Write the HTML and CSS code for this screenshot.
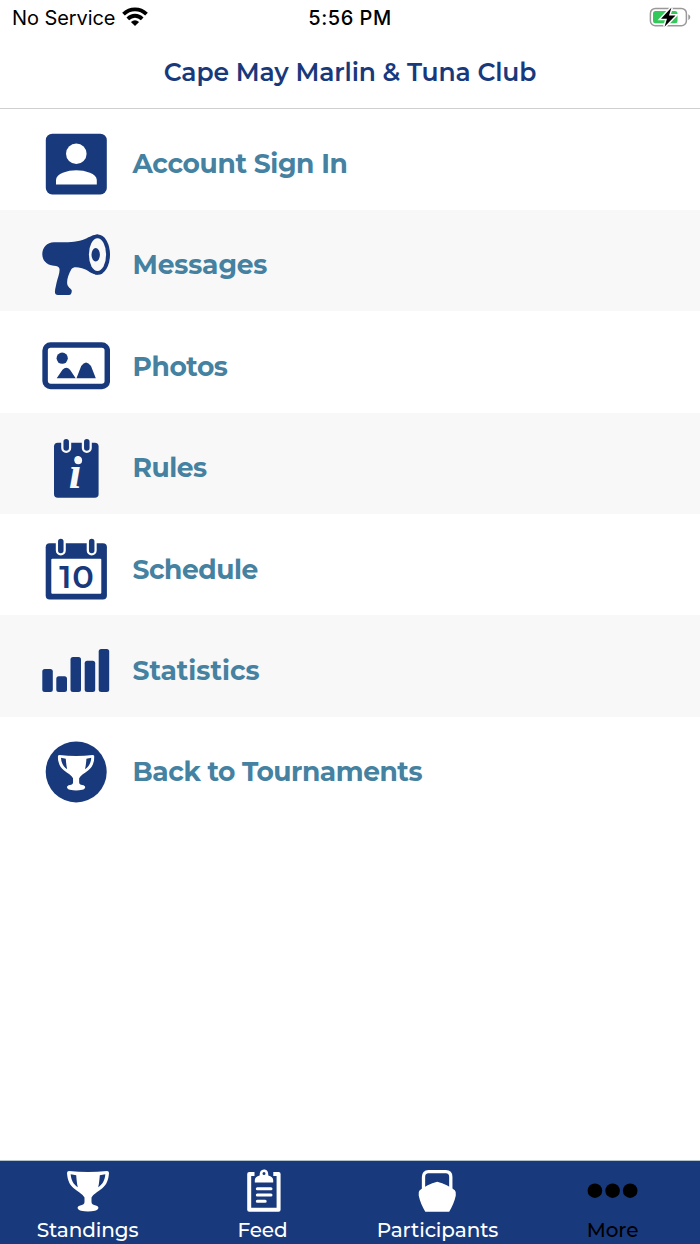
FILE: index.html
```
<!DOCTYPE html>
<html lang="en">
<head>
    <meta charset="utf-8">
    <title>Cape May Marlin &amp; Tuna Club</title>
    <link rel="stylesheet" href="styles.css">
</head>
<body>
<!-- shared trophy shape -->
<svg class="defs" width="0" height="0">
    <symbol id="trophy" viewBox="0 0 42 41">
        <path fill-rule="evenodd" d="M2 0Q21 2 40 0Q42 0 42 2C41.500 9 39.500 14 35 17.500C30.500 21 26 23.500 24.500 26.500V31C24.500 33 26 33.800 28 34.200C33 35 32 39 28 39.800Q21 41.200 14 39.800C10 39 9 35 14 34.200C16 33.800 17.500 33 17.500 31V26.500C16 23.500 11.500 21 7 17.500C2.500 14 .5 9 0 2Q0 0 2 0ZM3.700 3.200C4 8.500 6 13 10.800 16.200C9.800 12 9.500 8 9.200 4.200ZM38.300 3.200L32.800 4.200C32.500 8 32.200 12 31.200 16.200C36 13 38 8.500 38.300 3.200Z"/>
    </symbol>
</svg>

<div class="status-bar">
    <div class="carrier">
        <span>No Service</span>
        <svg class="wifi" width="26" height="20" viewBox="0 0 26 20">
            <g fill="none" stroke="#000" stroke-width="3.800">
                <path d="M1.500 7.200C8 .7 18 .7 24.500 7.200"/>
                <path d="M5.800 11.800C10 7.700 16 7.700 20.200 11.800"/>
            </g>
            <path d="M13 19L8.900 14.900Q13 11.600 17.100 14.900Z"/>
        </svg>
    </div>
    <div class="clock">5:56 PM</div>
    <div class="power">
        <svg width="42" height="22" viewBox="0 0 42 22">
            <rect x="1.400" y="1.400" width="36" height="17.400" rx="5" fill="none" stroke="#999" stroke-width="1.500"/>
            <path d="M39.300 7.200Q41.300 8 41.300 10.100T39.300 13.200Z" fill="#999"/>
            <rect x="4" y="4" width="24.500" height="12.300" rx="2.500" fill="#34c759"/>
            <path d="M22.500 .5L12 11.700H18L15.500 19.700L26.500 8.400H20Z" fill="#000" stroke="#fff" stroke-width="3" paint-order="stroke"/>
        </svg>
    </div>
</div>
<header class="title-bar"><h1>Cape May Marlin &amp; Tuna Club</h1></header>

<nav class="menu">
    <a class="menu-item account">
        <svg class="icon" viewBox="0 0 68 68">
            <rect x="3.800" y="3.700" width="61" height="60.800" rx="6.500"/>
            <circle class="cut" cx="34.300" cy="23.800" r="10.300"/>
            <path class="cut" d="M14 54.500V50C14 43.500 25.500 40.200 34.300 40.200S54.800 43.500 54.800 50V54.500Z"/>
        </svg>
        <span>Account Sign In</span>
    </a>
    <a class="menu-item messages">
        <svg class="icon" viewBox="0 0 68 68">
            <path d="M12 11.300C22 11.300 34 12 43 8C48 6 51 3.600 56 3.600V43.600C49 43.600 46 38.500 40 37.200C35 36 31.500 35.500 29.500 38C26 44 24.300 50 25.500 54C26.500 57 30 58 29.800 60Q29.500 64 27 64H16Q12.500 64 13 60C13.200 57 13.800 56 14.500 52C16 46 18.500 40 17.200 37Q16.500 35.200 12 34.700C4 34 .3 29 .3 23S5 11.300 12 11.300Z"/>
            <ellipse cx="56" cy="23.600" rx="12" ry="20.100"/>
            <ellipse class="cut" cx="55.500" cy="23.600" rx="8.600" ry="16.300"/>
            <ellipse cx="53.700" cy="23.700" rx="4.200" ry="6.700"/>
        </svg>
        <span>Messages</span>
    </a>
    <a class="menu-item photos">
        <svg class="icon" viewBox="0 0 68 68">
            <rect x="3.100" y="13" width="62.200" height="41.500" rx="5.500" fill="none" stroke="currentColor" stroke-width="5.500"/>
            <circle cx="20.200" cy="26.200" r="5.600"/>
            <path d="M14.700 46.300L20.500 37.800Q24.300 33.500 28 37.800L33.700 46.300ZM34.500 46.300L39.200 34Q44 27 49 34L53.800 46.300Z"/>
        </svg>
        <span>Photos</span>
    </a>
    <a class="menu-item rules">
        <svg class="icon" viewBox="0 0 68 68">
            <rect x="12" y="8.800" width="44.600" height="55" rx="3.800"/>
            <g class="ring-gap"><path d="M24.200 6V14M44.800 6V14"/></g>
            <g class="ring"><path d="M24.200 7.800V14M44.800 7.800V14"/></g>
            <text class="cut info" x="33" y="54" text-anchor="middle">i</text>
            <circle class="cut" cx="36.300" cy="26.500" r="3.800"/>
        </svg>
        <span>Rules</span>
    </a>
    <a class="menu-item schedule">
        <svg class="icon" viewBox="0 0 68 68">
            <rect x="3.700" y="8.200" width="61.200" height="56.200" rx="4"/>
            <g class="ring-gap"><path d="M18.800 5V15.500M49.700 5V15.500"/></g>
            <g class="ring"><path d="M18.800 6.500V15.500M49.700 6.500V15.500"/></g>
            <rect class="cut" x="9.300" y="23.700" width="50" height="35" rx="1"/>
            <text class="day" x="35" y="52.500" text-anchor="middle">10</text>
        </svg>
        <span>Schedule</span>
    </a>
    <a class="menu-item statistics">
        <svg class="icon" viewBox="0 0 68 68">
            <rect x=".3" y="32" width="10.500" height="23" rx="2.500"/>
            <rect x="14.300" y="39.300" width="10.700" height="15.700" rx="2.500"/>
            <rect x="28.500" y="20" width="10.500" height="35" rx="2.500"/>
            <rect x="42.700" y="23.700" width="10.500" height="31.300" rx="2.500"/>
            <rect x="56.700" y="12" width="10.500" height="43" rx="2.500"/>
        </svg>
        <span>Statistics</span>
    </a>
    <a class="menu-item back">
        <svg class="icon" viewBox="0 0 68 68">
            <circle cx="34.200" cy="33.900" r="30.500"/>
            <use class="cut" href="#trophy" x="15.700" y="17" width="36.800" height="35.900"/>
        </svg>
        <span>Back to Tournaments</span>
    </a>
</nav>

<nav class="tab-bar">
    <a class="tab standings">
        <svg width="44" height="44" viewBox="0 0 44 44"><use href="#trophy" x="1" y="2" width="42" height="41"/></svg>
        <span>Standings</span>
    </a>
    <a class="tab feed">
        <svg width="44" height="44" viewBox="0 0 44 44">
            <path d="M13.500 5H8.200V40.700H37.600V5H32.300" fill="none" stroke="currentColor" stroke-width="4" stroke-linejoin="round"/>
            <path fill-rule="evenodd" d="M13.800 13.600V11Q14 7.500 18.600 6.500C18.600 2.500 20 .5 23 .5S27.300 2.500 27.300 6.500Q32 7.500 32.200 11V13.600ZM24.500 4.500A1.500 1.500 0 1 0 21.500 4.500A1.500 1.500 0 1 0 24.500 4.500Z"/>
            <path d="M16.300 19.800H30M16.300 26H30M16.300 32.300H24.200" stroke="currentColor" stroke-width="3" stroke-linecap="round"/>
        </svg>
        <span>Feed</span>
    </a>
    <a class="tab participants">
        <svg width="44" height="44" viewBox="0 0 44 44">
            <path d="M7.500 21V8Q7.500 2.700 12.500 2.700H29.800Q34.800 2.700 34.800 8V21" fill="none" stroke="currentColor" stroke-width="3.300"/>
            <path d="M21.200 12.700Q31.500 15.500 38.800 21.300Q40.500 23 39.800 26.500C38.700 32 36 38 33.200 42.700H9.300C6.500 38 3.800 32 2.700 26.500Q2 23 3.700 21.300Q11 15.500 21.200 12.700Z"/>
        </svg>
        <span>Participants</span>
    </a>
    <a class="tab more active">
        <svg width="54" height="44" viewBox="0 0 54 44">
            <circle cx="8.900" cy="21.700" r="7.300"/>
            <circle cx="26.600" cy="21.700" r="7.300"/>
            <circle cx="44.200" cy="21.700" r="7.300"/>
        </svg>
        <span>More</span>
    </a>
</nav>
</body>
</html>
```
FILE: styles.css
```
body {
    margin: 0;
    height: 1244px;
    display: flex;
    flex-direction: column;
    background: #fff;
    font-family: Montserrat, Inter, sans-serif;
    overflow: hidden;
}
.defs {
    display: none;
}
svg {
    fill: currentColor;
    flex: none;
}

/* status bar */
.status-bar {
    display: grid;
    grid-template-columns: 1fr auto 1fr;
    align-items: center;
    height: 36px;
    padding: 0 9px 0 12px;
    box-sizing: border-box;
    font-family: Inter, sans-serif;
    font-size: 20px;
    color: #000;
}
.carrier {
    display: flex;
    align-items: center;
    gap: 7px;
    letter-spacing: -0.08px;
}
.wifi {
    margin-top: -3px;
}
.clock {
    font-weight: 500;
    letter-spacing: 0.5px;
    margin-right: 3px;
}
.power {
    display: flex;
    justify-content: flex-end;
}

.title-bar {
    height: 73px;
    box-sizing: border-box;
    border-bottom: 1px solid #cfcfcf;
    display: flex;
    justify-content: center;
    align-items: center;
}
h1 {
    margin: 0;
    font-size: 25px;
    font-weight: 600;
    letter-spacing: -0.1px;
    color: #18397c;
}

/* menu rows */
.menu {
    flex: 1;
}
.menu-item {
    display: flex;
    align-items: center;
    gap: 22.5px;
    height: 101.4px;
    padding: 9px 42px 0;
    box-sizing: border-box;
    background: var(--row);
    color: #4581a0;
    font-size: 26.5px;
    line-height: 32px;
    font-weight: 700;
    letter-spacing: -0.45px;
    --row: #fff;
}
.menu-item:first-child {
    height: 100.8px;
    padding-top: 8.6px;
}
.menu-item:nth-child(even) {
    --row: #f8f8f8;
}
.menu-item span {
    margin-top: 1px;
}
.account {
    letter-spacing: -0.35px;
}
.messages {
    letter-spacing: -0.15px;
}
.statistics {
    letter-spacing: 0;
}
.icon {
    width: 68px;
    height: 68px;
    color: #18397c;
}
.cut {
    fill: var(--row);
    color: var(--row);
}
.ring,
.ring-gap {
    stroke: currentColor;
    stroke-width: 5.5;
    stroke-linecap: round;
}
.ring-gap {
    stroke: var(--row);
    stroke-width: 10;
}
.info {
    font: italic bold 46px "Liberation Serif", serif;
}
.day {
    font: 600 32px Montserrat, Inter, sans-serif;
    letter-spacing: 1px;
}

/* bottom tabs */
.tab-bar {
    display: grid;
    grid-template-columns: repeat(4, 1fr);
    height: 84px;
    box-sizing: border-box;
    border-top: 1px solid #b4c4c8;
    background: #18397c;
    color: #fff;
}
.tab {
    display: flex;
    flex-direction: column;
    align-items: center;
    padding-top: 8px;
    font-size: 20px;
    font-weight: 500;
    line-height: 34px;
    letter-spacing: -0.1px;
}
.active {
    color: #000;
}
```
